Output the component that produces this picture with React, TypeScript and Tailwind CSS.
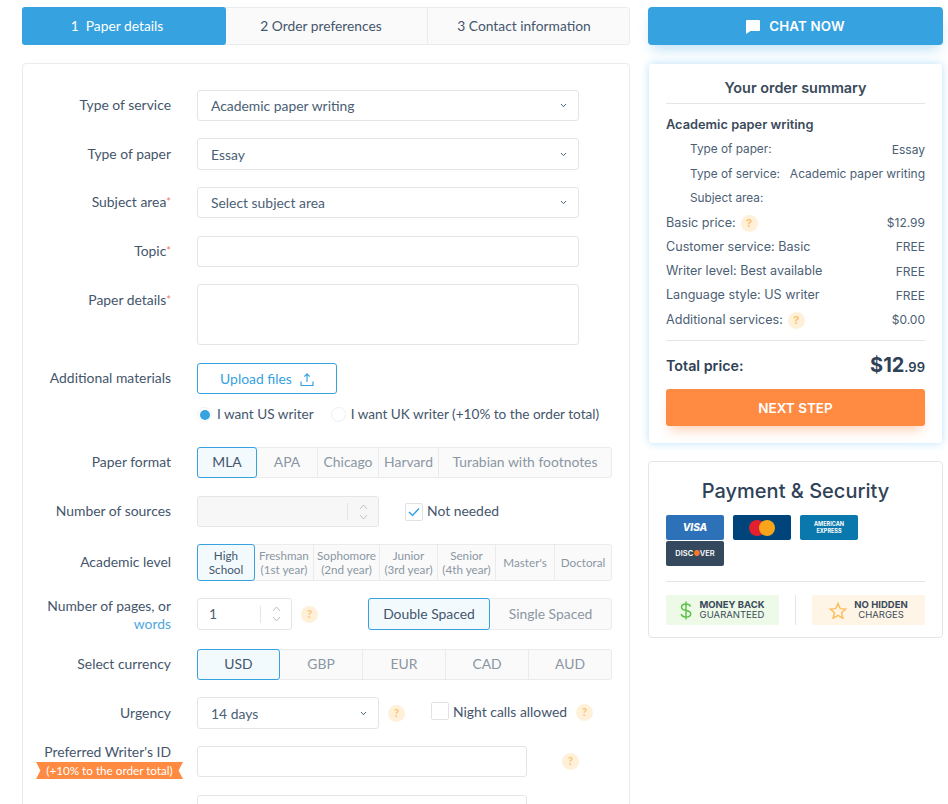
import React from "react";

const Help = ({ className = "" }: { className?: string }) => (
  <span className={`flex h-[17px] w-[17px] shrink-0 items-center justify-center rounded-full bg-[#fff0d9] text-[11px] font-bold text-[#fdc26d] ${className}`}>?</span>
);

const Chevron = () => (
  <svg width="7" height="5" viewBox="0 0 8 6" fill="none" stroke="#4b6075" strokeWidth="1.2" className="shrink-0"><path d="M1 1.2 4 4.4 7 1.2" /></svg>
);

const Row = ({ label, className = "", children, labelClass = "" }: { label: React.ReactNode; className?: string; children: React.ReactNode; labelClass?: string }) => (
  <div className={`flex ${className}`}>
    <div className={`w-[148px] shrink-0 text-right text-[13.9px] leading-[18px] text-[#44566c] ${labelClass}`}>{label}</div>
    <div className="ml-[26px] min-w-0 flex-1">{children}</div>
  </div>
);

const Sel = ({ children, className = "w-[382px] h-[31px]" }: { children?: React.ReactNode; className?: string }) => (
  <div className={`flex items-center justify-between rounded-[3px] border border-[#e3e6e8] bg-white pl-[13px] pr-[11px] text-[13.9px] text-[#4b6075] ${className}`}>
    <span className="translate-y-[1px]">{children}</span>
    <Chevron />
  </div>
);

const Input = ({ className = "w-[382px] h-[31px]" }: { className?: string }) => (
  <div className={`rounded-[3px] border border-[#e3e6e8] bg-white ${className}`} />
);

const Seg = ({ items, h, sel = 0, small = false, className = "w-[415px]" }: { items: { t: React.ReactNode; w?: string }[]; h: string; sel?: number; small?: boolean; className?: string }) => (
  <div className={`flex rounded-[3px] border border-[#e9ebed] bg-[#fafafa] ${h} ${className}`}>
    {items.map((it, i) => (
      <div
        key={i}
        className={`-my-px flex items-center justify-center text-center ${it.w ?? "flex-1"} ${small ? "text-[11.7px] leading-[13.5px]" : "text-[13.9px]"} ${
          i === sel
            ? `rounded-[3px] border border-[#36a2e0] bg-[#f3fafe] text-[#44566c] ${i === 0 ? "-ml-px" : ""}`
            : `border-[#e9ebed] text-[#8a97a3] ${i > sel + 1 ? "border-l" : ""}`
        }`}
      >
        {it.t}
      </div>
    ))}
  </div>
);

const Spin = ({ w, disabled = false, value, h = "h-[31px]" }: { w: string; disabled?: boolean; value?: string; h?: string }) => (
  <div className={`flex items-center rounded-[3px] border border-[#e3e6e8] pl-[11px] text-[13.9px] text-[#4b6075] ${w} ${h} ${disabled ? "bg-[#f7f7f7]" : "bg-white"}`}>
    <span className="flex-1">{value}</span>
    <span className="h-[17px] w-px bg-[#e3e6e8]" />
    <span className="flex w-[30px] flex-col items-center gap-[4px]">
      <svg width="9" height="6" viewBox="0 0 9 6" fill="none" stroke="#b9c1c8" strokeWidth="1"><path d="M1 5 4.5 1 8 5" /></svg>
      <svg width="9" height="6" viewBox="0 0 9 6" fill="none" stroke="#b9c1c8" strokeWidth="1"><path d="M1 1 4.5 5 8 1" /></svg>
    </span>
  </div>
);

const Req = () => <sup className="relative -top-[1px] text-[11px] text-[#f2786b]">*</sup>;

const SumRow = ({ l, r, sub = false, help = false }: { l: string; r?: string; sub?: boolean; help?: boolean }) => (
  <div className={`flex h-[24.3px] items-center justify-between text-[#4b6075] ${sub ? "pl-[24px] text-[11.8px]" : "text-[12.6px]"}`}>
    <span className="flex items-center gap-[4px]">{l}{help && <Help className="ml-[1px]" />}</span>
    <span className="text-[12px]">{r}</span>
  </div>
);

const CardBox = ({ bg, children }: { bg: string; children: React.ReactNode }) => (
  <div className={`flex h-[25px] w-[58px] items-center justify-center overflow-hidden rounded-[2px] ${bg}`}>{children}</div>
);

export default function App() {
  return (
    <div className="flex h-[804px] gap-[18px] overflow-hidden bg-white pl-[22px] pr-[5px] pt-[7px] [font-family:'Lato','Noto_Sans',sans-serif]">
      <div className="w-[608px] shrink-0">
        <div className="flex h-[38px] rounded-[3px] border border-[#e9ebed] bg-[#fafafa] text-[13.8px] text-[#44566c]">
          <div className="-my-px -ml-px flex w-[204px] items-center justify-center rounded-[3px] bg-[#36a2e0] pr-[14px] text-white">1&nbsp; Paper details</div>
          <div className="flex w-[202px] items-center justify-center border-r border-[#e9ebed] pr-[11px]">2 Order preferences</div>
          <div className="flex flex-1 items-center justify-center pr-[9px]">3 Contact information</div>
        </div>

        <div className="mt-[18px] h-[800px] rounded-[4px] border border-[#e9ebed] bg-white pt-[26px]">
          <Row label="Type of service" labelClass="pt-[6px]"><Sel>Academic paper writing</Sel></Row>
          <Row label="Type of paper" className="mt-[17px]" labelClass="pt-[7px]"><Sel className="h-[32px] w-[382px]">Essay</Sel></Row>
          <Row label={<>Subject area<Req /></>} className="mt-[17px]" labelClass="pt-[6px]"><Sel>Select subject area</Sel></Row>
          <Row label={<>Topic<Req /></>} className="mt-[18px]" labelClass="pt-[6px]"><Input /></Row>
          <Row label={<>Paper details<Req /></>} className="mt-[17px]" labelClass="pt-[7px]"><Input className="h-[61px] w-[382px]" /></Row>
          <Row label="Additional materials" className="mt-[18px]" labelClass="pt-[6px]">
            <div className="flex h-[31px] w-[140px] items-center justify-center gap-[8px] rounded-[3px] border border-[#36a2e0] pt-px text-[13.9px] text-[#36a2e0]">
              Upload files
              <svg width="14" height="15" viewBox="0 0 14 15" fill="none" stroke="#36a2e0" strokeWidth="1.2"><path d="M7 10V2M4.3 4.6 7 1.8l2.7 2.8M1 9.5V13.5h12V9.5" /></svg>
            </div>
            <div className="mt-[12px] flex h-[17px] items-center text-[13.6px] text-[#44566c]">
              <span className="flex h-[15px] w-[15px] items-center justify-center rounded-full border border-[#f0f1f2]"><span className="h-[10px] w-[10px] rounded-full bg-[#36a2e0]" /></span>
              <span className="ml-[5px]">I want US writer</span>
              <span className="ml-[17px] h-[15px] w-[15px] rounded-full border border-[#eceef0]" />
              <span className="ml-[5px]">I want UK writer (+10% to the order total)</span>
            </div>
          </Row>
          <Row label="Paper format" className="mt-[24px]" labelClass="pt-[6px]">
            <Seg h="h-[31px]" items={[{ t: "MLA", w: "w-[60px]" }, { t: "APA", w: "w-[60px]" }, { t: "Chicago", w: "w-[61px]" }, { t: "Harvard", w: "w-[60px]" }, { t: "Turabian with footnotes" }]} />
          </Row>
          <Row label="Number of sources" className="mt-[18px]" labelClass="pt-[6px]">
            <div className="flex items-center">
              <Spin w="w-[182px]" disabled />
              <span className="ml-[26px] flex h-[18px] w-[18px] items-center justify-center rounded-[2px] border border-[#dfe3e6]">
                <svg width="12" height="10" viewBox="0 0 12 10" fill="none" stroke="#36a2e0" strokeWidth="1.5"><path d="M1 5 4.5 8.5 11 1.5" /></svg>
              </span>
              <span className="ml-[4px] text-[13.9px] text-[#44566c]">Not needed</span>
            </div>
          </Row>
          <Row label="Academic level" className="mt-[17px]" labelClass="pt-[9px]">
            <Seg small h="h-[37px]" items={[
              { t: <>High<br />School</>, w: "w-[58px]" },
              { t: <>Freshman<br />(1st year)</>, w: "w-[58px]" },
              { t: <>Sophomore<br />(2nd year)</>, w: "w-[66px]" },
              { t: <>Junior<br />(3rd year)</>, w: "w-[58px]" },
              { t: <>Senior<br />(4th year)</>, w: "w-[58px]" },
              { t: "Master's", w: "w-[59px]" },
              { t: "Doctoral" },
            ]} />
          </Row>
          <Row label={<>Number of pages, or<br /><span className="text-[#4fa6e0]">words</span></>} className="mt-[17px]" labelClass="-mt-[1px]">
            <div className="flex items-center">
              <Spin w="w-[95px]" value="1" h="h-[32px]" />
              <Help className="ml-[9px]" />
              <Seg h="h-[32px]" className="ml-[50px] w-[244px]" items={[{ t: "Double Spaced", w: "w-[122px]" }, { t: "Single Spaced" }]} />
            </div>
          </Row>
          <Row label="Select currency" className="mt-[16px]" labelClass="pt-[6px]">
            <Seg h="h-[31px]" items={[{ t: "USD", w: "w-[83px]" }, { t: "GBP" }, { t: "EUR" }, { t: "CAD" }, { t: "AUD" }]} />
          </Row>
          <Row label="Urgency" className="mt-[17px]" labelClass="pt-[7px]">
            <div className="flex items-center">
              <Sel className="h-[32px] w-[182px]">14 days</Sel>
              <Help className="ml-[9px]" />
              <span className="ml-[26px] -mt-[4px] h-[18px] w-[18px] rounded-[2px] border border-[#dfe3e6]" />
              <span className="ml-[4px] -mt-[1px] text-[13.9px] text-[#44566c]">Night calls allowed</span>
              <Help className="ml-[9px] -mt-[1px]" />
            </div>
          </Row>
          <Row
            label={
              <span className="relative block">
                Preferred Writer's ID
                <span className="absolute left-[13px] top-[19px] block h-[17px] w-[147px] bg-[#ff8a42] text-center text-[11.7px] leading-[17px] text-white [clip-path:polygon(0_0,100%_0,97%_50%,100%_100%,0_100%,3%_50%)]">(+10% to the order total)</span>
              </span>
            }
            className="mt-[17px]"
            labelClass="-mt-[3px]"
          >
            <div className="flex items-center">
              <Input className="h-[31px] w-[330px]" />
              <Help className="ml-[35px]" />
            </div>
          </Row>
          <Row label="" className="mt-[18px]"><Input className="h-[31px] w-[330px]" /></Row>
        </div>
      </div>

      <div className="w-[295px] shrink-0 [font-family:'Inter','Noto_Sans',sans-serif]">
        <div className="flex h-[38px] items-center justify-center gap-[9px] rounded-[4px] bg-[#36a2e0] pt-px text-[13.3px] font-semibold tracking-[0.2px] text-white shadow-[0_8px_14px_-4px_rgba(54,162,224,0.35)]">
          <svg width="14" height="14" viewBox="0 0 14 14" fill="#fff"><path d="M1 0h12a1 1 0 0 1 1 1v9a1 1 0 0 1-1 1H4.5L0 14V1a1 1 0 0 1 1-1z" /></svg>
          CHAT NOW
        </div>

        <div className="mx-px mt-[19px] rounded-[3px] bg-white px-[17px] pb-[17px] pt-[14px] shadow-[0_0_8px_rgba(80,180,240,0.4)]">
          <div className="border-b border-[#e3e6e8] pb-[6px] text-center text-[14.4px] font-semibold leading-[19px] text-[#3a4a5a]">Your order summary</div>
          <div className="mb-[5px] mt-[12px] text-[12.8px] font-semibold leading-[17px] text-[#3a4a5a]">Academic paper writing</div>
          <SumRow sub l="Type of paper:" r="Essay" />
          <SumRow sub l="Type of service:" r="Academic paper writing" />
          <SumRow sub l="Subject area:" />
          <SumRow l="Basic price:" r="$12.99" help />
          <SumRow l="Customer service: Basic" r="FREE" />
          <SumRow l="Writer level: Best available" r="FREE" />
          <SumRow l="Language style: US writer" r="FREE" />
          <SumRow l="Additional services:" r="$0.00" help />
          <div className="mt-[8px] flex h-[49px] items-center justify-between border-t border-[#e3e6e8] text-[#2f4257]">
            <span className="text-[14.3px] font-semibold">Total price:</span>
            <span className="text-[20px] font-bold">$12<span className="text-[13px] font-semibold">.99</span></span>
          </div>
          <div className="flex h-[37px] items-center justify-center rounded-[3px] bg-[#ff8a42] text-[13.5px] font-semibold text-white shadow-[0_8px_12px_-4px_rgba(255,138,66,0.4)]">NEXT STEP</div>
        </div>

        <div className="mt-[18px] h-[177px] rounded-[4px] border border-[#e3e6e8] bg-white px-[17px] pt-[17px]">
          <div className="text-center text-[20px] font-medium leading-[24px] text-[#2f4257]">Payment &amp; Security</div>
          <div className="mt-[12px] border-b border-[#e3e6e8] pb-[15px]">
            <div className="flex w-[200px] flex-wrap gap-x-[9px] gap-y-px">
              <CardBox bg="bg-[#2d71b8]"><span className="text-[10px] font-extrabold italic text-white">VISA</span></CardBox>
              <CardBox bg="bg-[#00447c]">
                <svg width="26" height="16" viewBox="0 0 26 16"><circle cx="8" cy="8" r="8" fill="#e3202e" /><circle cx="18" cy="8" r="8" fill="#f9a51a" /></svg>
              </CardBox>
              <CardBox bg="bg-[#0a78ac]"><span className="text-center text-[5.5px] font-bold leading-[7px] text-white">AMERICAN<br />EXPRESS</span></CardBox>
              <CardBox bg="bg-[#34485e]">
                <span className="text-[7.5px] font-semibold text-white">DISC<span className="text-[#f27a24]">●</span>VER</span>
              </CardBox>
            </div>
          </div>
          <div className="mt-[13px] flex items-stretch justify-between">
            <div className="flex h-[30px] w-[113px] items-center justify-center gap-[7px] rounded-[2px] bg-[#edfae8]">
              <svg width="12" height="19" viewBox="0 0 12 19" fill="none" stroke="#5fc04c" strokeWidth="1.5"><path d="M10.5 5.5C10 3.7 8 3 6 3 3.5 3 1.5 4.2 1.5 6.3 1.5 11 10.7 8 10.7 12.7 10.7 14.8 8.5 16 6 16c-2.2 0-4.3-1-4.8-3M6 .5v18" /></svg>
              <span className="text-center text-[9.5px] leading-[10px] text-[#3a4a5a]"><b className="block font-bold">MONEY BACK</b>GUARANTEED</span>
            </div>
            <div className="w-px bg-[#e3e6e8]" />
            <div className="flex h-[30px] w-[113px] items-center justify-center gap-[7px] rounded-[2px] bg-[#fff5e6]">
              <svg width="18" height="17" viewBox="0 0 24 23" fill="none" stroke="#fdbc5f" strokeWidth="2"><path d="M12 2l3 7 7.5.6-5.7 5 1.8 7.4L12 18l-6.6 4 1.8-7.4-5.7-5L9 9z" /></svg>
              <span className="text-center text-[9.5px] leading-[10px] text-[#3a4a5a]"><b className="block font-bold">NO HIDDEN</b>CHARGES</span>
            </div>
          </div>
        </div>
      </div>
    </div>
  );
}
